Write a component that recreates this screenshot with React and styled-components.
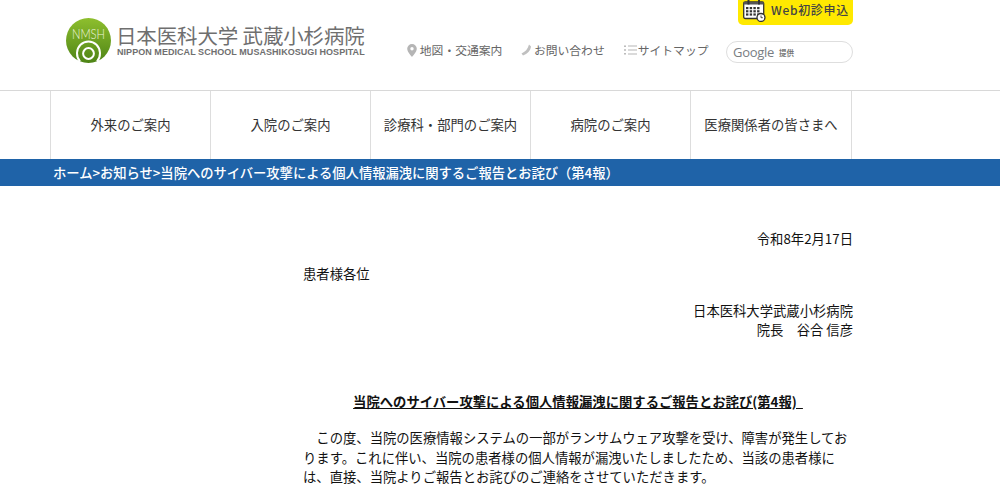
import styled, { createGlobalStyle } from "styled-components";

const GlobalStyle = createGlobalStyle`
  html, body {
    margin: 0;
    padding: 0;
    background: #fff;
    overflow: hidden;
    font-family: "Noto Sans CJK JP", "Liberation Sans", sans-serif;
    color: #333;
  }
`;

const Page = styled.div`
  width: 1000px;
  height: 485px;
  overflow: hidden;
`;

const Header = styled.header`
  height: 90px;
  padding: 0 147px 0 66px;
  display: flex;
  justify-content: space-between;
  border-bottom: 1px solid #d8d8d8;
`;

const Logo = styled.a`
  display: flex;
  align-items: flex-start;
  gap: 6px;
  padding-top: 18px;
`;

const LogoText = styled.div`
  display: flex;
  flex-direction: column;
  color: #6f6f6f;
`;

const LogoTitle = styled.span`
  font-size: 20.5px;
  line-height: 24px;
  margin-top: 5px;
  margin-left: -1px;
  white-space: nowrap;
  letter-spacing: -0.15px;
`;

const LogoSub = styled.span`
  font-family: "Liberation Sans", sans-serif;
  font-size: 9px;
  font-weight: 700;
  line-height: 10px;
  white-space: nowrap;
  letter-spacing: 0.05px;
`;

const HeaderRight = styled.div`
  display: flex;
  flex-direction: column;
  align-items: flex-end;
`;

const WebButton = styled.a`
  width: 115px;
  height: 25px;
  box-sizing: border-box;
  background: #ffe900;
  border-radius: 0 0 5px 5px;
  display: flex;
  justify-content: flex-start;
  gap: 5px;
  padding-left: 5px;
  color: #444;
  font-size: 12px;
  line-height: 20px;
  font-weight: 500;
  letter-spacing: 0.7px;
  white-space: nowrap;
`;

const UtilRow = styled.div`
  display: flex;
  align-items: center;
  margin-top: 16px;
`;

const UtilLink = styled.a`
  display: flex;
  align-items: center;
  gap: ${(p) => p.$gap || 3}px;
  margin-right: ${(p) => p.$space}px;
  font-size: 11.8px;
  line-height: 18px;
  color: #666;
  white-space: nowrap;
  margin-top: -4px;
`;

const SearchBox = styled.div`
  width: 127px;
  height: 22px;
  box-sizing: border-box;
  border: 1.5px solid #dedede;
  border-radius: 11px;
  display: flex;
  align-items: center;
  gap: 5px;
  padding-left: 6px;
`;

const GoogleWord = styled.span`
  font-size: 13px;
  color: #797d82;
  font-family: "Open Sans", sans-serif;
  font-weight: 500;
  letter-spacing: -0.3px;
`;

const Powered = styled.span`
  font-family: "Noto Sans CJK JP", sans-serif;
  font-size: 7.5px;
  font-weight: 700;
  color: #777;
`;

const Nav = styled.nav`
  display: flex;
  height: 68px;
  padding-left: 50px;
`;

const NavItem = styled.a`
  width: 160px;
  box-sizing: border-box;
  border-left: 1px solid #ddd;
  display: flex;
  align-items: center;
  justify-content: center;
  padding-bottom: 2px;
  font-size: 13.33px;
  color: #333;
  white-space: nowrap;

  &:last-child {
    width: 162px;
    border-right: 1px solid #ddd;
  }
`;

const Crumbs = styled.div`
  height: 27px;
  background: #1f63a8;
  color: #fff;
  font-size: 13.33px;
  font-weight: 500;
  line-height: 27px;
  padding-left: 53px;
  letter-spacing: -0.05px;
  white-space: nowrap;
`;

const Article = styled.main`
  width: 550px;
  margin-left: 303px;
  padding-top: 43px;
  font-size: 13.33px;
  line-height: 19px;
  color: #111;
`;

const RightLine = styled.p`
  margin: 0;
  text-align: right;
`;

const Addressee = styled.p`
  margin: 16px 0 18px;
`;

const Heading = styled.p`
  margin: 53px 0 0;
  text-align: center;
  font-weight: 700;
  text-decoration: underline;
`;

const Body = styled.p`
  margin: 17px 0 0;
  line-height: 19.5px;
  text-indent: 1em;
`;

function MapPin() {
  return (
    <svg width="10" height="13" viewBox="0 0 10 13">
      <path d="M5 0a4.8 4.8 0 0 0-4.8 4.8C.2 8 5 13 5 13s4.8-5 4.8-8.200A4.800 4.800 0 0 0 5 0zm0 6.500a1.700 1.700 0 1 1 0-3.400 1.700 1.700 0 0 1 0 3.400z" fill="#b5b5b5" />
    </svg>
  );
}

function Phone() {
  return (
    <svg width="11" height="12" viewBox="0 0 11 12">
      <path d="M8 .5l2 2c-.5 4-3.500 7.500-8 9l-1.500-2C4 8 7 5 8 .5z" fill="#c0c0c0" />
    </svg>
  );
}

function ListIcon() {
  return (
    <svg width="13" height="10" viewBox="0 0 13 10">
      <g fill="#b5b5b5">
        <rect x="0" y="0.500" width="2" height="1.400" />
        <rect x="0" y="4.300" width="2" height="1.400" />
        <rect x="0" y="8.100" width="2" height="1.400" />
        <rect x="4" y="0.500" width="9" height="1" />
        <rect x="4" y="4.500" width="9" height="1" />
        <rect x="4" y="8.500" width="9" height="1" />
      </g>
    </svg>
  );
}

function CalendarIcon() {
  return (
    <svg width="23" height="22" viewBox="0 0 23 22">
      <rect x="0.700" y="2" width="20" height="16.500" rx="1.500" fill="#fff" stroke="#333" strokeWidth="1.300" />
      <rect x="0.700" y="2" width="20" height="2.500" fill="#555" />
      <rect x="4.500" y="0" width="2" height="4.500" fill="#333" />
      <rect x="15" y="0" width="2" height="4.500" fill="#333" />
      <g fill="#333">
        {[7, 10.200, 13.400].map((y) =>
          [3, 6.700, 10.400, 14.100].map((x) => <rect key={`${x}-${y}`} x={x} y={y} width="2.400" height="2.200" />)
        )}
      </g>
      <circle cx="18" cy="17.500" r="4" fill="#fff" stroke="#333" strokeWidth="1.300" />
      <path d="M18 15.500v2.200h1.800" fill="none" stroke="#333" strokeWidth="0.900" />
    </svg>
  );
}

function LogoMark() {
  return (
    <svg width="45" height="45" viewBox="0 0 45 45">
      <defs>
        <linearGradient id="logoGreen" x1="0" y1="0" x2="0" y2="1">
          <stop offset="0" stopColor="#8ebf2e" />
          <stop offset="1" stopColor="#4e8416" />
        </linearGradient>
      </defs>
      <circle cx="22.500" cy="22.500" r="22.500" fill="url(#logoGreen)" />
      <text x="6" y="21" fontSize="14" fontWeight="300" fill="#eef5dc" fontFamily="Lato, sans-serif" textLength="33" lengthAdjust="spacingAndGlyphs">NMSH</text>
      <g fill="none" stroke="#fff">
        <path d="M14 43.500A11.500 12 0 1 1 31 43.500" strokeWidth="2" />
        <circle cx="22.500" cy="35.500" r="5.400" strokeWidth="2" />
      </g>
    </svg>
  );
}

export default function App() {
  return (
    <Page>
      <GlobalStyle />
      <Header>
        <Logo>
          <LogoMark />
          <LogoText>
            <LogoTitle>日本医科大学 武蔵小杉病院</LogoTitle>
            <LogoSub>NIPPON MEDICAL SCHOOL MUSASHIKOSUGI HOSPITAL</LogoSub>
          </LogoText>
        </Logo>
        <HeaderRight>
          <WebButton>
            <CalendarIcon />
            Web初診申込
          </WebButton>
          <UtilRow>
            <UtilLink $space={18.5}><MapPin />地図・交通案内</UtilLink>
            <UtilLink $space={19} $gap={2}><Phone />お問い合わせ</UtilLink>
            <UtilLink $space={17.5} $gap={1}><ListIcon />サイトマップ</UtilLink>
            <SearchBox>
              <GoogleWord>Google</GoogleWord>
              <Powered>提供</Powered>
            </SearchBox>
          </UtilRow>
        </HeaderRight>
      </Header>
      <Nav>
        <NavItem>外来のご案内</NavItem>
        <NavItem>入院のご案内</NavItem>
        <NavItem>診療科・部門のご案内</NavItem>
        <NavItem>病院のご案内</NavItem>
        <NavItem>医療関係者の皆さまへ</NavItem>
      </Nav>
      <Crumbs>ホーム&gt;お知らせ&gt;当院へのサイバー攻撃による個人情報漏洩に関するご報告とお詫び（第4報）</Crumbs>
      <Article>
        <RightLine>令和8年2月17日</RightLine>
        <Addressee>患者様各位</Addressee>
        <RightLine>日本医科大学武蔵小杉病院</RightLine>
        <RightLine>院長　谷合 信彦</RightLine>
        <Heading>当院へのサイバー攻撃による個人情報漏洩に関するご報告とお詫び(第4報)&nbsp;&nbsp;</Heading>
        <Body>この度、当院の医療情報システムの一部がランサムウェア攻撃を受け、障害が発生しております。これに伴い、当院の患者様の個人情報が漏洩いたしましたため、当該の患者様には、直接、当院よりご報告とお詫びのご連絡をさせていただきます。</Body>
      </Article>
    </Page>
  );
}
